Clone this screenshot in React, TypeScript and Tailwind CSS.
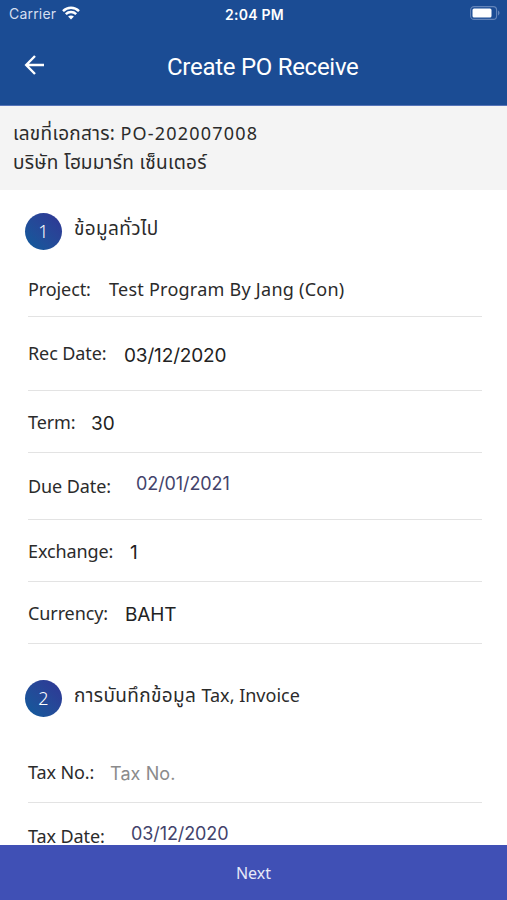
import { ReactNode } from "react";

const latin = "font-['Noto_Sans','Noto_Sans_Thai','Kanit',sans-serif]";
const system = "font-['Inter','Liberation_Sans',sans-serif]";

type RowProps = {
  label: string;
  row: string;
  labelClass: string;
  valueClass: string;
  children: ReactNode;
};

function Row({ label, row, labelClass, valueClass, children }: RowProps) {
  return (
    <div className={`flex shrink-0 items-end border-b border-[#e3e3e3] whitespace-nowrap leading-6 ${row}`}>
      <span className={`shrink-0 text-[18px] tracking-[-0.1px] text-[#2b2b2b] ${labelClass}`}>{label}</span>
      <span className={valueClass}>{children}</span>
    </div>
  );
}

function Step({ n, title, className, titleClass }: { n: number; title: ReactNode; className: string; titleClass: string }) {
  return (
    <div className={`flex shrink-0 items-start ${className}`}>
      <span className="flex size-[37px] shrink-0 items-center justify-center rounded-full bg-linear-to-tr from-[#0a5c9c] to-[#2f3594] text-[18px] font-light text-white">
        {n}
      </span>
      <span className={`ml-3 text-[19px] leading-6 tracking-[0.35px] whitespace-nowrap text-[#2b2b2b] ${titleClass}`}>{title}</span>
    </div>
  );
}

export default function App() {
  return (
    <div className={`flex h-[900px] w-[507px] flex-col overflow-hidden bg-white ${latin}`}>
      <header className="h-[106px] shrink-0 border-b border-[#5674b8] bg-[#1b4c94] text-white">
        <div className={`grid h-[28px] grid-cols-3 items-center pr-[7px] pl-[9px] ${system}`}>
          <div className="-mt-[2px] flex items-center gap-[6px]">
            <span className="text-[14px] tracking-[0.2px] text-[#d5dff0]">Carrier</span>
            <svg width="18" height="14" viewBox="0 0 18 14" fill="none" stroke="white" strokeWidth="2.5">
              <path d="M1 5.1C5.6.7 12.4.7 17 5.1" />
              <path d="M3.8 8.2c3-2.8 7.4-2.8 10.4 0" />
              <path d="M6.1 10.5c1.7-1.5 4.1-1.5 5.8 0L9 13.5z" fill="white" stroke="none" />
            </svg>
          </div>
          <span className="text-center text-[14px] font-semibold tracking-[0.25px] whitespace-nowrap">2:04 PM</span>
          <div className="-mt-[2px] flex justify-end">
            <svg width="30" height="14" viewBox="0 0 30 14">
              <rect x=".6" y=".6" width="26" height="12.8" rx="3.5" fill="none" stroke="#6485ba" strokeWidth="1.1" />
              <rect x="2.5" y="2.5" width="19" height="9" rx="1.5" fill="white" />
              <path d="M28 4.6c2 .8 2 4 0 4.8z" fill="#6485ba" />
            </svg>
          </div>
        </div>
        <div className="flex h-[76px] items-center pl-[24px]">
          <svg className="mb-[2px] shrink-0" width="21" height="20" viewBox="0 0 21 20" fill="none" stroke="white" strokeWidth="2.4">
            <path d="M11 1 2.2 10l8.8 9M2.5 10H20" />
          </svg>
          <h1 className="mt-[2px] ml-[122px] font-['Roboto',sans-serif] text-[24px] tracking-[-0.28px] whitespace-nowrap">
            Create PO Receive
          </h1>
        </div>
      </header>

      <section className="h-[84px] shrink-0 bg-[#f4f4f4] pt-[13px] pl-[13px] text-[19px] leading-[29px] tracking-[0.3px] whitespace-nowrap text-[#2b2b2b]">
        <p>
          เลขที่เอกสาร: <span className="text-[18px] tracking-[1.2px]">PO-202007008</span>
        </p>
        <p>บริษัท โฮมมาร์ท เซ็นเตอร์</p>
      </section>

      <main className="flex min-h-0 flex-1 flex-col overflow-hidden pr-[25px] pl-[28px]">
        <Step n={1} title="ข้อมูลทั่วไป" className="mt-[23px] -ml-[3px] h-[37px]" titleClass="mt-[3px]" />
        <Row label="Project:" row="h-[67px] pb-[15px]" labelClass="w-[81px]" valueClass="text-[18px] tracking-[0.25px] text-[#2b2b2b]">
          Test Program By Jang (Con)
        </Row>
        <Row label="Rec Date:" row="h-[74px] pb-[24px]" labelClass="w-[96px] mb-px" valueClass={`relative top-[2px] text-[19px] tracking-[-0.15px] text-[#222] ${system}`}>
          03/12/2020
        </Row>
        <Row label="Term:" row="h-[62px] pb-[17px]" labelClass="w-[63px] mb-px" valueClass={`relative top-px text-[19px] text-[#222] ${system}`}>
          30
        </Row>
        <Row label="Due Date:" row="h-[67px] pb-[21px]" labelClass="w-[108px]" valueClass={`mb-[2px] text-[18px] tracking-[-0.1px] text-[#43436b] ${system}`}>
          02/01/2021
        </Row>
        <Row label="Exchange:" row="h-[62px] pb-[17px]" labelClass="w-[102px] mb-px" valueClass={`relative top-px text-[19px] text-[#222] ${system}`}>
          1
        </Row>
        <Row label="Currency:" row="h-[62px] pb-[17px]" labelClass="w-[97px] mb-px" valueClass={`relative top-px text-[19px] tracking-[-0.1px] text-[#222] ${system}`}>
          BAHT
        </Row>
        <Step
          n={2}
          title={
            <>
              การบันทึกข้อมูล <span className="text-[18px] tracking-normal">Tax, Invoice</span>
            </>
          }
          className="mt-[36px] -ml-[3px] h-[37px]"
          titleClass="mt-[3px]"
        />
        <Row label="Tax No.:" row="h-[86px] pb-[17px]" labelClass="w-[82px] mb-px" valueClass={`relative top-px text-[18px] tracking-[0.1px] text-[#8b8b8b] ${system}`}>
          Tax No.
        </Row>
        <Row label="Tax Date:" row="h-[67px] pb-[21px]" labelClass="w-[103px]" valueClass={`mb-[2px] text-[18px] tracking-[-0.1px] text-[#43436b] ${system}`}>
          03/12/2020
        </Row>
      </main>

      <button className="h-[55px] shrink-0 bg-[#4050b5] text-[16px] text-[#e6e8f8]">Next</button>
    </div>
  );
}
